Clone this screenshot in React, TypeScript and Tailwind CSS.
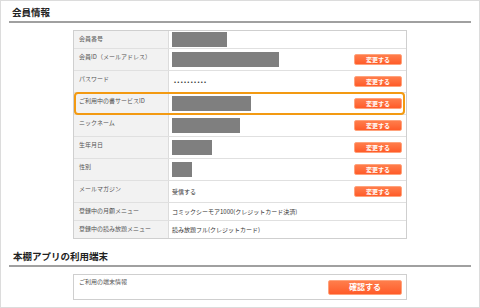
import React from "react";

const font = { fontFamily: '"Noto Sans CJK JP", "Noto Sans", sans-serif' };

type Row = {
  label: string;
  h: number;
  block?: number;
  value?: string;
  dots?: boolean;
  button?: boolean;
  highlight?: boolean;
};

const rows: Row[] = [
  { label: "会員番号", h: 18, block: 55 },
  { label: "会員ID（メールアドレス）", h: 22, block: 107, button: true },
  { label: "パスワード", h: 22, dots: true, button: true },
  { label: "ご利用中の書サービスID", h: 22, block: 79, button: true, highlight: true },
  { label: "ニックネーム", h: 22, block: 68, button: true },
  { label: "生年月日", h: 22, block: 40, button: true },
  { label: "性別", h: 22, block: 20, button: true },
  { label: "メールマガジン", h: 22, value: "受信する", button: true },
  { label: "登録中の月額メニュー", h: 18, value: "コミックシーモア1000(クレジットカード決済)" },
  { label: "登録中の読み放題メニュー", h: 18, value: "読み放題フル(クレジットカード)" },
];

function SmallButton() {
  return (
    <div className="w-[48px] h-[11px] rounded-[2px] border border-[#ffa27c] bg-linear-to-b from-[#ff7d4b] to-[#ff5b28] flex items-center justify-center text-white text-[6px] leading-none font-bold">
      変更する
    </div>
  );
}

export default function App() {
  return (
    <div className="w-[480px] h-[308px] border border-[#dcdcdc] bg-white text-[#333] overflow-hidden" style={font}>
      <div className="mx-[8px] pt-[5px] pb-[3px] pl-[3px] border-b-2 border-[#a0a0a0]">
        <div className="text-[9.5px] leading-[12px] font-bold text-[#222]">会員情報</div>
      </div>

      <div className="mt-[7px] ml-[72px] w-[334px] border border-[#cfcfcf]">
        {rows.map((r, i) => (
          <div
            key={i}
            className={`relative flex ${i < rows.length - 1 ? "border-b border-[#e0e0e0]" : ""}`}
            style={{ height: i < rows.length - 1 ? r.h : r.h - 1 }}
          >
            <div className="w-[95px] shrink-0 bg-[#f2f2f2] border-r border-[#dcdcdc] pl-[5px] pt-[4px] text-[6px] leading-[8px] text-[#555] whitespace-nowrap">
              {r.label}
            </div>
            <div className="flex-1 flex items-center pl-[3px] text-[6px] leading-[8px] text-[#333] whitespace-nowrap">
              {r.block !== undefined && (
                <div className="h-[15px] bg-[#7f7f7f]" style={{ width: r.block }} />
              )}
              {r.dots && <span className="pl-[2px] tracking-[1.3px] text-[6px]">••••••••••</span>}
              {r.value && <span>{r.value}</span>}
            </div>
            <div className="w-[56px] shrink-0 flex items-center justify-end pr-[4px]">
              {r.button && <SmallButton />}
            </div>
            {r.highlight && (
              <div className="absolute left-[0px] right-[1px] top-[-1px] bottom-[-1px] border-2 border-[#f39a12] rounded-[4px] pointer-events-none" />
            )}
          </div>
        ))}
      </div>

      <div className="mx-[8px] mt-[11px] pb-[3px] pl-[4px] border-b-2 border-[#a0a0a0]">
        <div className="text-[9.5px] leading-[12px] font-bold text-[#222]">本棚アプリの利用端末</div>
      </div>

      <div className="mt-[7px] ml-[72px] w-[334px] h-[26px] border border-[#cfcfcf] flex justify-between pl-[5px] pr-[4px]">
        <div className="pt-[3px] text-[6px] leading-[8px] text-[#555]">ご利用の端末情報</div>
        <div className="self-center w-[74px] h-[15px] rounded-[2px] border border-[#ffa27c] bg-linear-to-b from-[#ff7d4b] to-[#ff5b28] flex items-center justify-center text-white text-[8px] leading-none font-bold">
          確認する
        </div>
      </div>
    </div>
  );
}
